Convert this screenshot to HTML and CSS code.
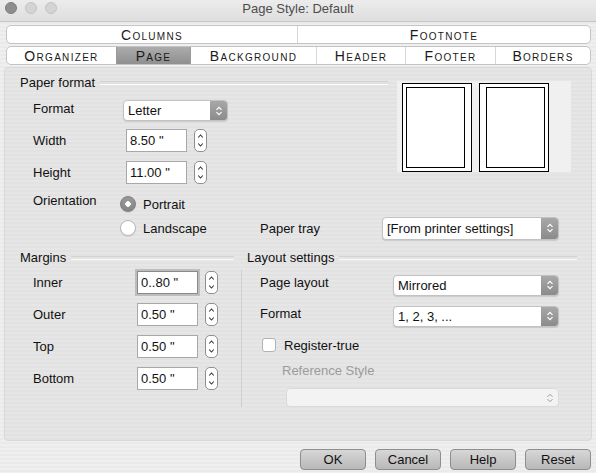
FILE: index.html
```html
<!DOCTYPE html>
<html lang="en">
<head>
    <meta charset="UTF-8">
    <title>Page Style: Default</title>
    <link rel="stylesheet" href="styles.css">
</head>
<body>
    <div class="window">
        <div class="titlebar">
            <div class="lights">
                <span class="light dark"></span>
                <span class="light"></span>
                <span class="light"></span>
            </div>
            <div class="title">Page Style: Default</div>
            <div></div>
        </div>

        <div class="tabs">
            <div class="tab-row top">
                <div class="tab">Columns</div>
                <div class="tab">Footnote</div>
            </div>
            <div class="tab-row bottom">
                <div class="tab">Organizer</div>
                <div class="tab active">Page</div>
                <div class="tab">Background</div>
                <div class="tab">Header</div>
                <div class="tab">Footer</div>
                <div class="tab">Borders</div>
            </div>
        </div>

        <div class="panel">
            <div class="paper">
                <div class="heading paper-heading"><span>Paper format</span></div>
                <div class="preview">
                    <div class="page left"><div class="page-inner"></div></div>
                    <div class="page right"><div class="page-inner"></div></div>
                </div>

                <div class="lbl raised">Format</div>
                <div class="ctl">
                    <div class="select format-select">
                        <span class="value">Letter</span>
                        <span class="arrow"><svg width="8" height="12" viewBox="0 0 8 12"><path d="M1.5 4.8 L4 2.3 L6.5 4.8 M1.5 7.2 L4 9.7 L6.5 7.2" fill="none" stroke="#fff" stroke-width="1.2"/></svg></span>
                    </div>
                </div>

                <div class="lbl">Width</div>
                <div class="ctl">
                    <div class="spin-field shift">
                        <input class="num" type="text" value='8.50 "' readonly>
                        <span class="spin"><svg width="7" height="17" viewBox="0 0 7 17"><path d="M1.2 5.5 L3.5 3 L5.8 5.5 M1.2 11.5 L3.5 14 L5.8 11.5" fill="none" stroke="#333" stroke-width="1.1"/></svg></span>
                    </div>
                </div>

                <div class="lbl">Height</div>
                <div class="ctl">
                    <div class="spin-field shift">
                        <input class="num" type="text" value='11.00 "' readonly>
                        <span class="spin"><svg width="7" height="17" viewBox="0 0 7 17"><path d="M1.2 5.5 L3.5 3 L5.8 5.5 M1.2 11.5 L3.5 14 L5.8 11.5" fill="none" stroke="#333" stroke-width="1.1"/></svg></span>
                    </div>
                </div>

                <div class="lbl orient">Orientation</div>
                <div class="ctl">
                    <div class="radio"><span class="dot checked"></span>Portrait</div>
                </div>

                <div class="ctl">
                    <div class="radio"><span class="dot"></span>Landscape</div>
                </div>
                <div class="lbl2">Paper tray</div>
                <div class="ctl2">
                    <div class="select tray-select">
                        <span class="value">[From printer settings]</span>
                        <span class="arrow"><svg width="8" height="12" viewBox="0 0 8 12"><path d="M1.5 4.8 L4 2.3 L6.5 4.8 M1.5 7.2 L4 9.7 L6.5 7.2" fill="none" stroke="#fff" stroke-width="1.2"/></svg></span>
                    </div>
                </div>
            </div>

            <div class="lower">
                <div class="margins">
                    <div class="heading margins-heading"><span>Margins</span></div>
                    <div class="margin-rows">
                        <div class="lbl">Inner</div>
                        <div class="ctl">
                            <div class="spin-field">
                                <input class="num focused" type="text" value='0..80 "' readonly>
                                <span class="spin"><svg width="7" height="17" viewBox="0 0 7 17"><path d="M1.2 5.5 L3.5 3 L5.8 5.5 M1.2 11.5 L3.5 14 L5.8 11.5" fill="none" stroke="#333" stroke-width="1.1"/></svg></span>
                            </div>
                        </div>
                        <div class="lbl">Outer</div>
                        <div class="ctl">
                            <div class="spin-field">
                                <input class="num" type="text" value='0.50 "' readonly>
                                <span class="spin"><svg width="7" height="17" viewBox="0 0 7 17"><path d="M1.2 5.5 L3.5 3 L5.8 5.5 M1.2 11.5 L3.5 14 L5.8 11.5" fill="none" stroke="#333" stroke-width="1.1"/></svg></span>
                            </div>
                        </div>
                        <div class="lbl">Top</div>
                        <div class="ctl">
                            <div class="spin-field">
                                <input class="num" type="text" value='0.50 "' readonly>
                                <span class="spin"><svg width="7" height="17" viewBox="0 0 7 17"><path d="M1.2 5.5 L3.5 3 L5.8 5.5 M1.2 11.5 L3.5 14 L5.8 11.5" fill="none" stroke="#333" stroke-width="1.1"/></svg></span>
                            </div>
                        </div>
                        <div class="lbl">Bottom</div>
                        <div class="ctl">
                            <div class="spin-field">
                                <input class="num" type="text" value='0.50 "' readonly>
                                <span class="spin"><svg width="7" height="17" viewBox="0 0 7 17"><path d="M1.2 5.5 L3.5 3 L5.8 5.5 M1.2 11.5 L3.5 14 L5.8 11.5" fill="none" stroke="#333" stroke-width="1.1"/></svg></span>
                            </div>
                        </div>
                    </div>
                </div>

                <div class="layout">
                    <div class="heading layout-heading"><span>Layout settings</span></div>
                    <div class="layout-rows">
                        <div class="lbl">Page layout</div>
                        <div class="ctl">
                            <div class="select wide-select">
                                <span class="value">Mirrored</span>
                                <span class="arrow"><svg width="8" height="12" viewBox="0 0 8 12"><path d="M1.5 4.8 L4 2.3 L6.5 4.8 M1.5 7.2 L4 9.7 L6.5 7.2" fill="none" stroke="#fff" stroke-width="1.2"/></svg></span>
                            </div>
                        </div>
                        <div class="lbl">Format</div>
                        <div class="ctl">
                            <div class="select wide-select">
                                <span class="value">1, 2, 3, ...</span>
                                <span class="arrow"><svg width="8" height="12" viewBox="0 0 8 12"><path d="M1.5 4.8 L4 2.3 L6.5 4.8 M1.5 7.2 L4 9.7 L6.5 7.2" fill="none" stroke="#fff" stroke-width="1.2"/></svg></span>
                            </div>
                        </div>
                        <div class="full check-row"><span class="checkbox"></span>Register-true</div>
                        <div class="full ref-label">Reference Style</div>
                        <div class="full">
                            <div class="select disabled">
                                <span class="value"></span>
                                <span class="arrow"><svg width="8" height="12" viewBox="0 0 8 12"><path d="M1.5 4.8 L4 2.3 L6.5 4.8 M1.5 7.2 L4 9.7 L6.5 7.2" fill="none" stroke="#9a9a9a" stroke-width="1"/></svg></span>
                            </div>
                        </div>
                    </div>
                </div>
            </div>
        </div>

        <div class="actions">
            <button class="btn">OK</button>
            <button class="btn">Cancel</button>
            <button class="btn">Help</button>
            <button class="btn">Reset</button>
        </div>
    </div>
</body>
</html>
```

FILE: styles.css
```css
* {
    box-sizing: border-box;
    margin: 0;
    padding: 0;
}

body {
    width: 596px;
    height: 473px;
    overflow: hidden;
    font-family: "Liberation Sans", Arial, sans-serif;
    font-size: 13px;
    color: #111;
    background: #ececec;
}

.window {
    width: 596px;
    height: 473px;
    background: repeating-linear-gradient(#efefef 0 2px, #eaeaea 2px 4px);
}

/* title bar */
.titlebar {
    height: 22px;
    display: grid;
    grid-template-columns: 1fr auto 1fr;
    align-items: center;
    padding-bottom: 5px;
    background: linear-gradient(#ececec, #dedede);
    border-bottom: 1px solid #c6c6c6;
}

.lights {
    display: flex;
    gap: 8px;
    padding-left: 5px;
}

.light {
    width: 12px;
    height: 12px;
    border-radius: 50%;
    background: #d4d4d4;
    border: 1px solid #c3c3c3;
}

.light.dark {
    background: #8d8d8d;
    border-color: #7c7c7c;
}

.title {
    color: #4d4d4d;
    font-size: 13px;
}

/* tabs */
.tabs {
    margin: 3px 5px 0 6px;
    display: flex;
    flex-direction: column;
    gap: 2px;
}

.tab-row {
    display: grid;
    height: 19px;
    background: #fff;
    border: 1px solid #c4c4c4;
    border-radius: 5px;
    overflow: hidden;
}

.tab-row.top {
    grid-template-columns: 290px 1fr;
}

.tab-row.bottom {
    grid-template-columns: 109px 74px 126px 89px 90px 1fr;
}

.tab {
    display: flex;
    align-items: center;
    justify-content: center;
    font-variant: small-caps;
    font-size: 14px;
    letter-spacing: 1.3px;
    color: #1a1a1a;
    border-left: 1px solid #d6d6d6;
}

.tab:first-child {
    border-left: none;
}

.tab.active {
    background: linear-gradient(#acacac, #8f8f8f);
    border-left-color: #9a9a9a;
}

.tab.active + .tab {
    border-left-color: #9a9a9a;
}

/* main panel */
.panel {
    margin: 2px 4px 0;
    height: 374px;
    border: 1px solid #d8d8d8;
    border-radius: 4px;
    background: repeating-linear-gradient(#e6e6e6 0 2px, #e2e2e2 2px 4px);
    padding: 3px 0 0 15px;
}

.heading {
    display: flex;
    align-items: center;
    height: 16px;
    line-height: 16px;
    color: #111;
}

.heading::after {
    content: "";
    flex: 1;
    height: 2px;
    margin-left: 5px;
    border-top: 1px solid #d2d2d2;
    border-bottom: 1px solid #fbfbfb;
}

.lbl { grid-column: 2; }
.ctl { grid-column: 3; }
.lbl2 { grid-column: 4; }
.ctl2 { grid-column: 5; }

/* paper format */
.paper {
    display: grid;
    grid-template-columns: 13px 90px 137px 122px 177px 16px;
    grid-template-rows: 24px 31px 29px 34px 30px 18px;
    align-items: center;
}

.paper-heading {
    grid-column: 1 / 5;
    grid-row: 1;
    margin-right: -6px;
}

.paper .raised {
    margin-top: -5px;
}

.paper .orient {
    margin-top: -7px;
}

.preview {
    grid-column: 4 / 7;
    grid-row: 1 / 5;
    justify-self: end;
    align-self: start;
    width: 174px;
    height: 91px;
    margin: 10px 4px 0 0;
    padding: 2px 5px;
    display: flex;
    gap: 7px;
    background: #f0f0f0;
}

.page {
    width: 70px;
    height: 89px;
    background: #fff;
    border: 1px solid #000;
}

.page.left {
    padding: 3px 6px 3px 3px;
}

.page.right {
    padding: 3px 3px 3px 6px;
}

.page-inner {
    height: 100%;
    border: 1px solid #000;
}

/* controls */
.select {
    display: flex;
    height: 21px;
    background: #fff;
    border: 1px solid #c2c2c2;
    border-radius: 4px;
    box-shadow: 0 1px 1px rgba(0, 0, 0, 0.12);
    overflow: hidden;
}

.select .value {
    flex: 1;
    padding-left: 4px;
    line-height: 19px;
    color: #111;
    white-space: nowrap;
}

.select .arrow {
    width: 17px;
    display: flex;
    align-items: center;
    justify-content: center;
    background: linear-gradient(#a8a8a8, #8b8b8b);
}

.format-select {
    width: 105px;
}

.tray-select {
    width: 177px;
    height: 23px;
}

.tray-select .value {
    line-height: 21px;
}

.wide-select {
    width: 166px;
}

.select.disabled {
    width: 273px;
    height: 19px;
    margin-left: 26px;
    background: #f3f3f3;
    border-color: #dadada;
    box-shadow: none;
}

.select.disabled .arrow {
    background: none;
}

.spin-field {
    display: flex;
    gap: 7px;
}

.spin-field.shift {
    margin-left: 3px;
}

.num {
    width: 61px;
    height: 23px;
    border: 1px solid #a8a8a8;
    background: #fff;
    padding-left: 3px;
    font-family: inherit;
    font-size: 13px;
    color: #111;
    outline: none;
}

.num.focused {
    border-color: #8a8a8a;
    box-shadow: 0 0 0 2px #bdbdbd;
}

.spin {
    width: 13px;
    height: 23px;
    display: flex;
    align-items: center;
    justify-content: center;
    background: #fff;
    border: 1px solid #8f8f8f;
    border-radius: 5px;
}

.radio {
    display: flex;
    align-items: center;
    gap: 7px;
    margin-left: -3px;
}

.dot {
    width: 16px;
    height: 16px;
    border-radius: 50%;
    background: #fff;
    border: 1px solid #b6b6b6;
    box-shadow: 0 1px 1px rgba(0, 0, 0, 0.08);
}

.dot.checked {
    background: radial-gradient(circle, #fff 0 2.5px, transparent 3px), linear-gradient(#999, #858585);
    border-color: #7d7d7d;
}

/* lower sections */
.lower {
    display: flex;
    margin-top: 13px;
}

.margins {
    width: 221px;
}

.margins-heading {
    margin-right: 7px;
}

.margin-rows {
    display: grid;
    grid-template-columns: 13px 104px auto;
    grid-auto-rows: 32px;
    align-items: center;
}

.layout {
    flex: 1;
}

.layout-heading {
    padding-left: 6px;
    margin-right: 14px;
}

.layout-rows {
    margin-top: 4px;
    height: 137px;
    border-left: 1px solid #cecece;
    display: grid;
    grid-template-columns: 18px 133px 166px;
    grid-template-rows: 30px 32px 26px 24px 25px;
    align-items: center;
}

.layout-rows .lbl {
    margin-top: -6px;
}

.full {
    grid-column: 2 / 4;
}

.check-row {
    display: flex;
    align-items: center;
    gap: 8px;
    margin-left: 2px;
}

.checkbox {
    width: 14px;
    height: 14px;
    background: #fff;
    border: 1px solid #b2b2b2;
    border-radius: 3px;
}

.ref-label {
    padding-left: 22px;
    color: #9b9b9b;
}

.layout-rows .full:last-child {
    align-self: end;
}

/* dialog buttons */
.actions {
    display: flex;
    justify-content: flex-end;
    gap: 9px;
    margin-top: 8px;
    padding-right: 5px;
}

.btn {
    width: 66px;
    height: 21px;
    border: 1px solid #8e8e8e;
    border-radius: 4px;
    background: linear-gradient(#d7d7d7, #b8b8b8);
    font-family: inherit;
    font-size: 13px;
    color: #111;
}
```
